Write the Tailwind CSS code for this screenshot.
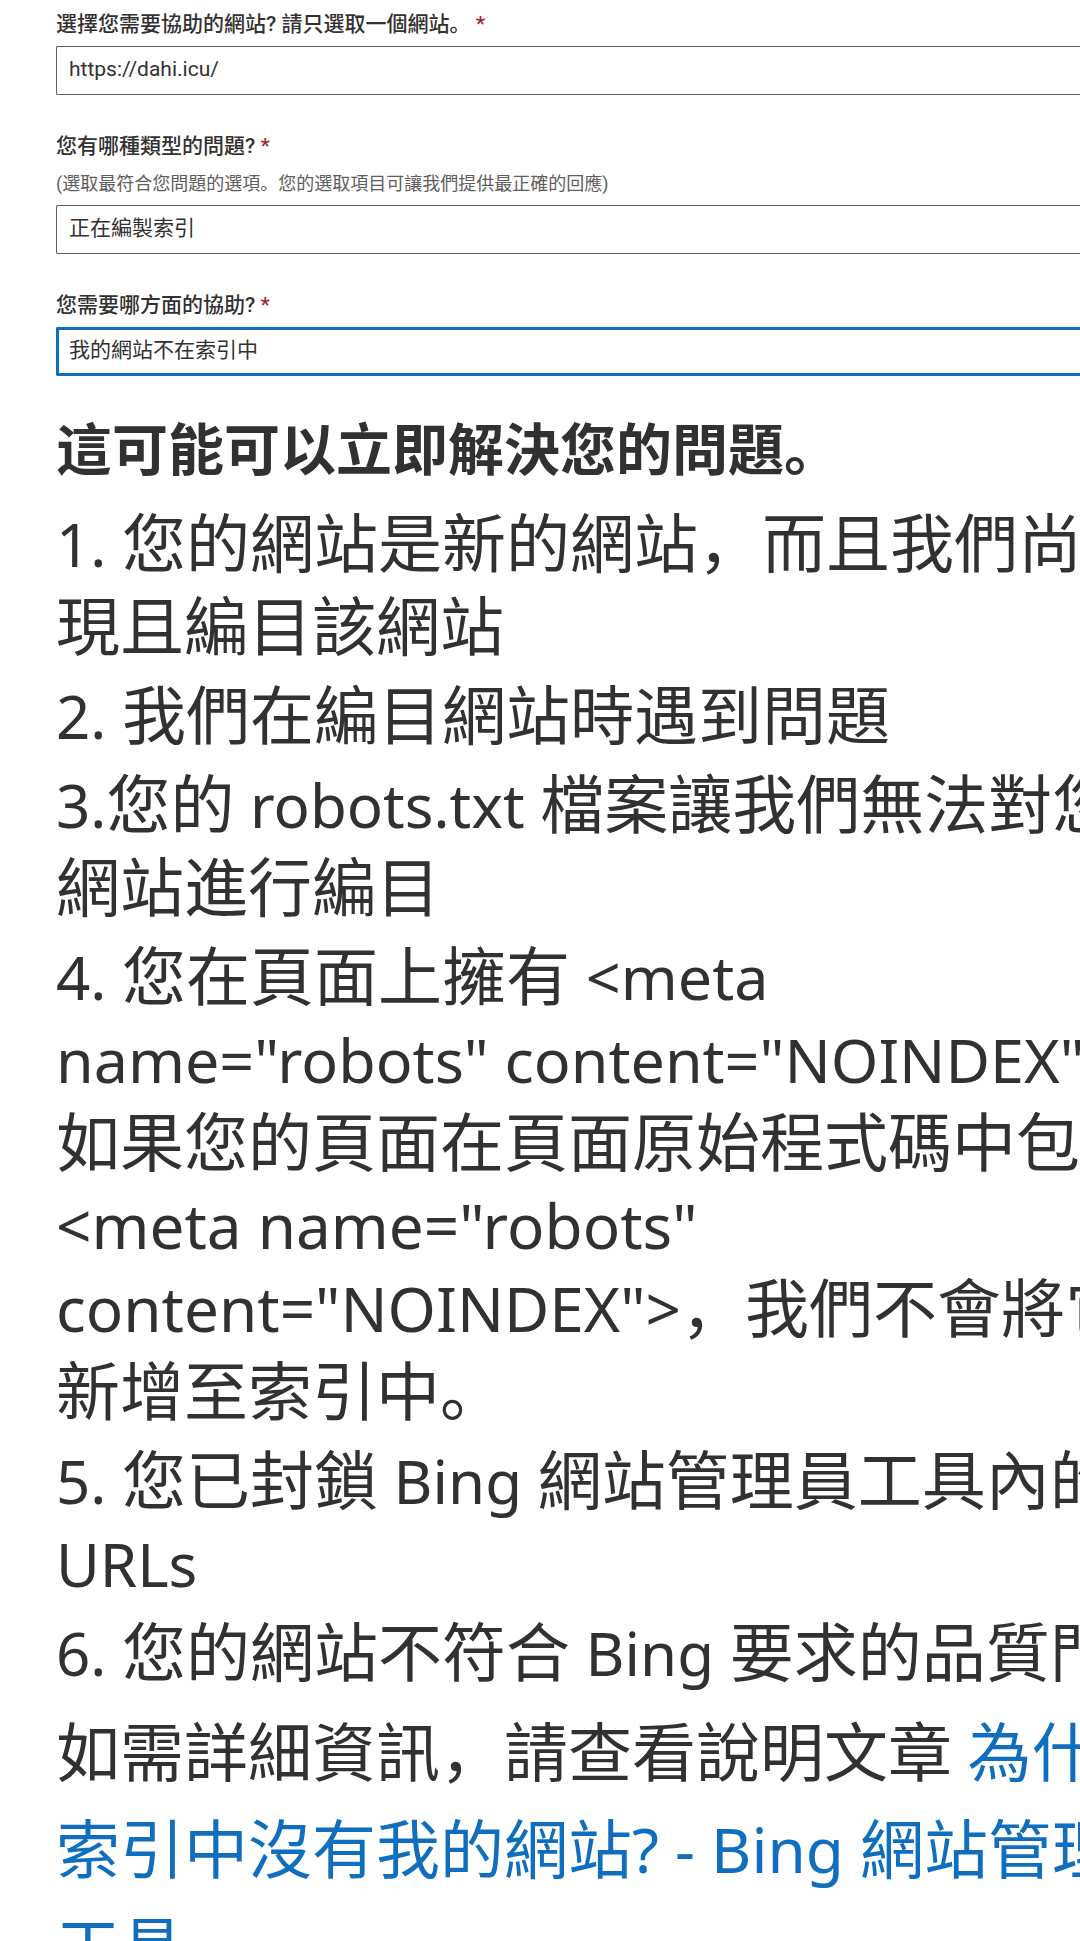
<!DOCTYPE html>
<html lang="zh-Hans">
<head>
<meta charset="utf-8">
<meta name="viewport" content="width=device-width, initial-scale=1">
<title>網站支援</title>
<script src="https://cdn.jsdelivr.net/npm/@tailwindcss/browser@4"></script>
</head>
<body class="bg-white text-[#323130]">
<main class="h-screen overflow-hidden pl-14 pt-2 font-['Roboto','Noto_Sans_CJK_SC',sans-serif]">
  <form class="flex flex-col gap-[35px]">
    <div class="flex flex-col gap-1.5">
      <label for="site" class="text-[21px] leading-8 font-medium">選擇您需要協助的網站? 請只選取一個網站。 <span class="text-[#a4262c]">*</span></label>
      <select id="site" class="h-[49px] w-full appearance-none rounded-l-xs border border-r-0 border-[#605e5c] bg-white px-3 pb-0.5 text-[21px] outline-none"><option>https://dahi.icu/</option></select>
    </div>
    <div class="flex flex-col gap-1.5">
      <label for="type" class="text-[21px] leading-8 font-medium">您有哪種類型的問題? <span class="text-[#a4262c]">*</span></label>
      <p class="text-lg leading-[31px] text-[#605e5c]">(選取最符合您問題的選項。您的選取項目可讓我們提供最正確的回應)</p>
      <select id="type" class="h-[49px] w-full appearance-none rounded-l-xs border border-r-0 border-[#605e5c] bg-white px-3 pb-0.5 text-[21px] outline-none"><option>正在編製索引</option></select>
    </div>
    <div class="flex flex-col gap-1.5">
      <label for="help" class="text-[21px] leading-8 font-medium">您需要哪方面的協助? <span class="text-[#a4262c]">*</span></label>
      <select id="help" class="h-[49px] w-full appearance-none rounded-l-xs border-3 border-r-0 border-[#106ebe] bg-white px-2.5 pb-0.5 text-[21px] outline-none"><option>我的網站不在索引中</option></select>
    </div>
  </form>
  <section class="pt-[30px] font-['Noto_Sans_CJK_SC',sans-serif] whitespace-nowrap">
    <h2 class="text-[56px] leading-20 font-bold">這可能可以立即解決您的問題。</h2>
    <div class="flex flex-col gap-1.5 pt-3 text-[64px] leading-[83px]">
      <p><span class="font-['Noto_Sans'] text-[60px] leading-none">1. </span>您的網站是新的網站，而且我們尚未發<br>現且編目該網站</p>
      <p><span class="font-['Noto_Sans'] text-[60px] leading-none">2. </span>我們在編目網站時遇到問題</p>
      <p><span class="font-['Noto_Sans'] text-[60px] leading-none">3.</span>您的<span class="font-['Noto_Sans'] text-[60px] leading-none"> robots.txt </span>檔案讓我們無法對您的<br>網站進行編目</p>
      <p><span class="font-['Noto_Sans'] text-[60px] leading-none">4. </span>您在頁面上擁有<span class="font-['Noto_Sans'] text-[61px] leading-none"> &lt;meta<br>name="robots" content="NOINDEX"&gt;</span><br>如果您的頁面在頁面原始程式碼中包含<br><span class="font-['Noto_Sans'] text-[62px] leading-none">&lt;meta name="robots"<br>content="NOINDEX"&gt;</span>，我們不會將它<br>新增至索引中。</p>
      <p><span class="font-['Noto_Sans'] text-[60px] leading-none">5. </span>您已封鎖<span class="font-['Noto_Sans'] text-[60px] leading-none"> Bing </span>網站管理員工具內的<br><span class="font-['Noto_Sans'] text-[60px] leading-none">URLs</span></p>
      <p><span class="font-['Noto_Sans'] text-[60px] leading-none">6. </span>您的網站不符合<span class="font-['Noto_Sans'] text-[60px] leading-none"> Bing </span>要求的品質門檻</p>
    </div>
    <p class="pt-2.5 text-[64px] leading-[97px]">如需詳細資訊，請查看說明文章<span class="font-['Noto_Sans'] text-[60px] leading-none"> </span><a href="#" class="text-[#106ebe]">為什麼<br>索引中沒有我的網站<span class="font-['Noto_Sans'] text-[62px] leading-none">? - Bing </span>網站管理員<br>工具</a></p>
  </section>
</main>
</body>
</html>
